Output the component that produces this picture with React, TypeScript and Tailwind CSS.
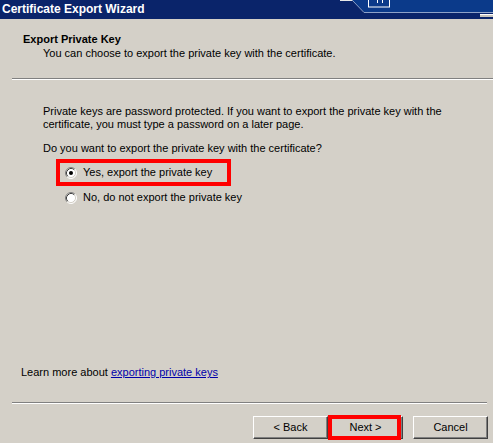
import React from "react";

function Radio({ checked }: { checked?: boolean }) {
  return (
    <svg width="12" height="12" viewBox="0 0 12 12" className="shrink-0">
      <circle cx="6" cy="6" r="5" fill="#ffffff" />
      <path d="M2.11 9.89 A5.5 5.5 0 0 1 9.89 2.11" fill="none" stroke="#808080" strokeWidth="1" />
      <path d="M9.89 2.11 A5.5 5.5 0 0 1 2.11 9.89" fill="none" stroke="#ffffff" strokeWidth="1" />
      <path d="M2.82 9.18 A4.5 4.5 0 0 1 9.18 2.82" fill="none" stroke="#404040" strokeWidth="1" />
      <path d="M9.18 2.82 A4.5 4.5 0 0 1 2.82 9.18" fill="none" stroke="#d4d0c8" strokeWidth="1" />
      {checked && <circle cx="6" cy="6" r="2" fill="#000000" />}
    </svg>
  );
}

function Btn({ label, className = "" }: { label: string; className?: string }) {
  return (
    <div
      className={
        "w-[75px] h-[23px] flex items-center justify-center bg-[#d4d0c8] border border-t-white border-l-white border-r-[#404040] border-b-[#404040] shadow-[inset_-1px_-1px_0_#808080] text-[11px] leading-none text-black " +
        className
      }
    >
      {label}
    </div>
  );
}

export default function App() {
  return (
    <div className="w-[493px] h-[443px] bg-[#d4d0c8] flex flex-col overflow-hidden text-[11px] text-black font-['Liberation_Sans',Arial,sans-serif]">
      {/* Title bar */}
      <div className="relative h-[19px] shrink-0 bg-[#0a246a]">
        <span className="pl-[2px] text-white font-bold text-[12px] leading-[19px] whitespace-nowrap">
          Certificate Export Wizard
        </span>
        <svg className="absolute right-0 top-0" width="153" height="19" viewBox="0 0 153 19">
          <rect x="0" y="0" width="12" height="1" fill="#e8e8e8" />
          <polygon points="12,0 24,12 153,12 153,0" fill="#0b3a8a" />
          <polyline points="12,0 24,12.5 153,12.5" fill="none" stroke="#8ea2c8" strokeWidth="1" />
          <rect x="28.5" y="-1" width="21" height="8" fill="none" stroke="#ffffff" strokeWidth="1" />
          <line x1="37.5" y1="0" x2="37.5" y2="3" stroke="#ffffff" strokeWidth="1" />
          <line x1="42.5" y1="0" x2="42.5" y2="3" stroke="#ffffff" strokeWidth="1" />
          <rect x="140" y="14" width="13" height="1" fill="#ffffff" />
          <rect x="140" y="15" width="13" height="2" fill="#c8c4bc" />
        </svg>
      </div>

      {/* Header */}
      <div className="pt-[13px] shrink-0">
        <div className="pl-[23px] font-bold leading-[14px]">Export Private Key</div>
        <div className="pl-[43px] mt-[1px] leading-[13px]">
          You can choose to export the private key with the certificate.
        </div>
      </div>

      <div className="mt-[18px] ml-[12px] h-0 border-t border-b border-t-[#808080] border-b-white shrink-0" />

      {/* Body */}
      <div className="pl-[43px] mt-[25px] shrink-0">
        <div className="leading-[13px]">
          Private keys are password protected. If you want to export the private key with the
          <br />
          certificate, you must type a password on a later page.
        </div>
        <div className="mt-[11px] leading-[13px]">Do you want to export the private key with the certificate?</div>
        <div className="mt-[4px] ml-[13px] w-[175px] h-[27px] border-[4px] border-[#ff0000] flex items-center pl-[5px] gap-[6px]">
          <Radio checked />
          <span className="leading-[13px] whitespace-nowrap">Yes, export the private key</span>
        </div>
        <div className="mt-[5px] ml-[22px] h-[13px] flex items-center gap-[6px]">
          <Radio />
          <span className="leading-[13px] whitespace-nowrap">No, do not export the private key</span>
        </div>
      </div>

      <div className="flex-1" />

      <div className="pl-[21px] leading-[13px] shrink-0">
        Learn more about{" "}
        <span className="text-[#0000aa] underline">exporting private keys</span>
      </div>

      <div className="mt-[23px] ml-[12px] mr-[6px] h-0 border-t border-b border-t-[#808080] border-b-white shrink-0" />

      <div className="mt-[12px] mb-[4px] pr-[5px] h-[23px] flex justify-end shrink-0">
        <Btn label="< Back" />
        <div className="relative">
          <Btn label="Next >" />
          <div className="absolute left-0 -top-px w-[73px] h-[25px] border-[4px] border-[#ff0000]" />
        </div>
        <Btn label="Cancel" className="ml-[10px]" />
      </div>
    </div>
  );
}
